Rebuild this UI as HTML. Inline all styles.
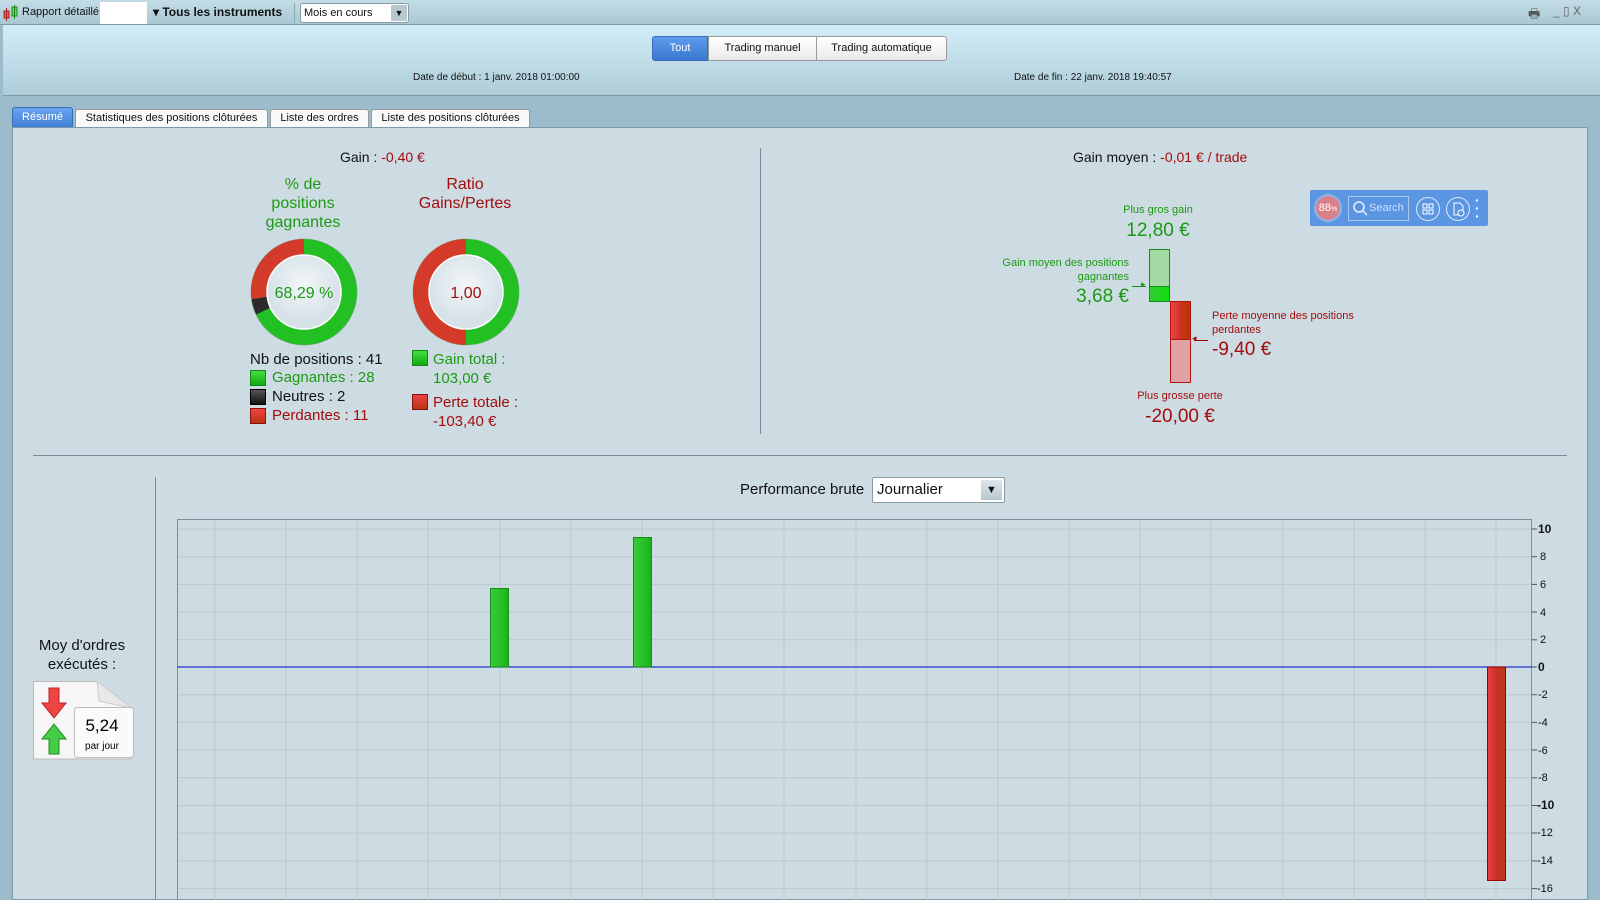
<!DOCTYPE html>
<html><head><meta charset="utf-8"><style>
*{margin:0;padding:0;box-sizing:border-box}
body{width:1600px;height:900px;overflow:hidden;background:#9dbccb;font-family:"Liberation Sans",sans-serif;position:relative;color:#111}
.a{position:absolute;white-space:nowrap}
.g{color:#1c9a12}.r{color:#a30c0c}
</style></head><body>
<div class="a" style="left:0;top:0;width:1600px;height:25px;background:linear-gradient(#c3dde6,#a9c8d4);border-bottom:1px solid #7d9aa8"></div>
<svg class="a" style="left:3px;top:5px" width="16" height="17"><rect x="1" y="6" width="5" height="7" fill="#e55" stroke="#a22"/><line x1="3.5" y1="3" x2="3.5" y2="16" stroke="#a22"/><rect x="9" y="2" width="5" height="9" fill="#5d5" stroke="#282"/><line x1="11.5" y1="0" x2="11.5" y2="14" stroke="#282"/></svg>
<div class="a" style="left:22px;top:6px;font-size:11px">Rapport détaillé</div>
<div class="a" style="left:100px;top:2px;width:47px;height:22px;background:#fff"></div>
<div class="a" style="left:153px;top:5px;font-size:12px;font-weight:bold">▾ Tous les instruments</div>
<div class="a" style="left:294px;top:3px;width:1px;height:20px;background:#8aa"></div>
<div class="a" style="left:300px;top:3px;width:109px;height:20px;background:#fff;border:1px solid #8a9aa2;border-radius:3px;font-size:11px;padding:3px 3px">Mois en cours</div>
<div class="a" style="left:391px;top:5px;width:16px;height:16px;background:#b8c8d0;font-size:9px;text-align:center;line-height:16px">▼</div>
<div class="a" style="left:1528px;top:5px;font-size:13px;color:#555">🖶</div>
<div class="a" style="left:1553px;top:4px;font-size:12px;color:#666">_ ▯ X</div>
<div class="a" style="left:3px;top:25px;width:1597px;height:71px;background:linear-gradient(#d2edf8,#aecdd9);border-bottom:1px solid #7d9aa8"></div>
<div class="a" style="left:652px;top:36px;width:56px;height:25px;background:linear-gradient(#5c9cec,#3b78d0);border:1px solid #3a6bb5;border-radius:3px 0 0 3px;color:#fff;font-size:11px;text-align:center;line-height:23px">Tout</div>
<div class="a" style="left:708px;top:36px;width:109px;height:25px;background:linear-gradient(#fff,#eaeaea);border:1px solid #999;font-size:11px;text-align:center;line-height:23px">Trading manuel</div>
<div class="a" style="left:816px;top:36px;width:131px;height:25px;background:linear-gradient(#fff,#eaeaea);border:1px solid #999;border-radius:0 3px 3px 0;font-size:11px;text-align:center;line-height:23px">Trading automatique</div>
<div class="a" style="left:413px;top:72px;font-size:10px">Date de début :  1 janv. 2018 01:00:00</div>
<div class="a" style="left:1014px;top:72px;font-size:10px">Date de fin :  22 janv. 2018 19:40:57</div>
<div class="a" style="left:12px;top:107px;width:61px;height:21px;background:linear-gradient(#69a4ee,#3f7fd6);border:1px solid #3a6bb5;border-radius:3px 3px 0 0;color:#fff;font-size:11px;text-align:center;line-height:19px">Résumé</div>
<div class="a" style="left:75px;top:109px;width:193px;height:19px;background:#fafafa;border:1px solid #999;border-radius:3px 3px 0 0;font-size:11px;text-align:center;line-height:17px">Statistiques des positions clôturées</div>
<div class="a" style="left:270px;top:109px;width:99px;height:19px;background:#fafafa;border:1px solid #999;border-radius:3px 3px 0 0;font-size:11px;text-align:center;line-height:17px">Liste des ordres</div>
<div class="a" style="left:371px;top:109px;width:159px;height:19px;background:#fafafa;border:1px solid #999;border-radius:3px 3px 0 0;font-size:11px;text-align:center;line-height:17px">Liste des positions clôturées</div>
<div class="a" style="left:12px;top:127px;width:1576px;height:773px;background:#cddce3;border:1px solid #7d9aa8"></div>
<div class="a" style="left:340px;top:149px;font-size:14px">Gain : <span class="r">-0,40 €</span></div>
<div class="a g" style="left:233px;top:175px;width:140px;text-align:center;font-size:16px;line-height:19px;white-space:normal">% de<br>positions<br>gagnantes</div>
<div class="a r" style="left:395px;top:175px;width:140px;text-align:center;font-size:16px;line-height:19px">Ratio<br>Gains/Pertes</div>
<svg class="a" style="left:240px;top:228px" width="130" height="130">
<defs><radialGradient id="ig" cx="50%" cy="40%"><stop offset="0" stop-color="#f2f6f8"/><stop offset="1" stop-color="#d6e2e8"/></radialGradient></defs>
<circle cx="64" cy="64" r="53" fill="#c8d2d8" stroke="#aab" />
<circle cx="64" cy="64" r="45" fill="none" stroke="#22c022" stroke-width="16"/>
<path d="M64 19 A45 45 0 0 0 19.4 70" fill="none" stroke="#d43a2a" stroke-width="16"/>
<path d="M19.4 70 A45 45 0 0 0 23.5 83" fill="none" stroke="#2a2a2a" stroke-width="16"/>
<circle cx="64" cy="64" r="37" fill="url(#ig)" stroke="#fff" stroke-width="1.5"/>
<text x="64" y="70" text-anchor="middle" font-size="16" fill="#1c9a12" font-family="Liberation Sans">68,29 %</text></svg>
<svg class="a" style="left:402px;top:228px" width="130" height="130">
<circle cx="64" cy="64" r="53" fill="#c8d2d8" stroke="#aab"/>
<circle cx="64" cy="64" r="45" fill="none" stroke="#22c022" stroke-width="16"/>
<path d="M64 19 A45 45 0 0 0 64 109" fill="none" stroke="#d43a2a" stroke-width="16"/>
<circle cx="64" cy="64" r="37" fill="url(#ig)" stroke="#fff" stroke-width="1.5"/>
<text x="64" y="70" text-anchor="middle" font-size="16" fill="#a30c0c" font-family="Liberation Sans">1,00</text></svg>
<div class="a" style="left:250px;top:350px;font-size:15px;line-height:19px">Nb de positions : 41</div>
<div class="a" style="left:250px;top:370px;width:16px;height:16px;background:linear-gradient(#4d4,#1a1);border:1px solid #181"></div>
<div class="a g" style="left:272px;top:369px;font-size:15px">Gagnantes : 28</div>
<div class="a" style="left:250px;top:389px;width:16px;height:16px;background:linear-gradient(#555,#111);border:1px solid #000"></div>
<div class="a" style="left:272px;top:388px;font-size:15px">Neutres : 2</div>
<div class="a" style="left:250px;top:408px;width:16px;height:16px;background:linear-gradient(#e44,#b31);border:1px solid #811"></div>
<div class="a r" style="left:272px;top:407px;font-size:15px">Perdantes : 11</div>
<div class="a" style="left:412px;top:350px;width:16px;height:16px;background:linear-gradient(#4d4,#1a1);border:1px solid #181"></div>
<div class="a g" style="left:433px;top:350px;font-size:15px;line-height:19px">Gain total :<br>103,00 €</div>
<div class="a" style="left:412px;top:394px;width:16px;height:16px;background:linear-gradient(#e44,#b31);border:1px solid #811"></div>
<div class="a r" style="left:433px;top:393px;font-size:15px;line-height:19px">Perte totale :<br>-103,40 €</div>
<div class="a" style="left:760px;top:148px;width:1px;height:286px;background:#7a8c96"></div>
<div class="a" style="left:1073px;top:149px;font-size:14px">Gain moyen : <span class="r">-0,01 € / trade</span></div>
<div class="a g" style="left:1088px;top:204px;width:140px;text-align:center;font-size:11px">Plus gros gain</div>
<div class="a g" style="left:1088px;top:220px;width:140px;text-align:center;font-size:19px">12,80 €</div>
<div class="a" style="left:1149px;top:249px;width:21px;height:53px;background:#a3d9a3;border:1px solid #1a8a1a"></div>
<div class="a" style="left:1149px;top:286px;width:21px;height:16px;background:linear-gradient(90deg,#3c3,#1d1);border:1px solid #1a8a1a"></div>
<div class="a" style="left:1170px;top:301px;width:21px;height:82px;background:#e0a2a2;border:1px solid #b01515"></div>
<div class="a" style="left:1170px;top:301px;width:21px;height:39px;background:linear-gradient(90deg,#e44,#c32 50%,#b30);border:1px solid #b01515"></div>
<div class="a g" style="left:980px;top:256px;width:149px;text-align:right;font-size:11px;line-height:14px">Gain moyen des positions<br>gagnantes</div>
<div class="a g" style="left:1040px;top:286px;width:89px;text-align:right;font-size:19px">3,68 €</div>
<div class="a" style="left:1132px;top:286px;width:14px;height:1px;background:#1a8a1a"></div><div class="a g" style="left:1141px;top:279px;font-size:9px">▸</div>
<div class="a r" style="left:1212px;top:309px;font-size:11px;line-height:14px">Perte moyenne des positions<br>perdantes</div>
<div class="a r" style="left:1212px;top:339px;font-size:19px">-9,40 €</div>
<div class="a" style="left:1194px;top:340px;width:14px;height:1px;background:#a00"></div><div class="a r" style="left:1192px;top:333px;font-size:9px">◂</div>
<div class="a r" style="left:1110px;top:390px;width:140px;text-align:center;font-size:11px">Plus grosse perte</div>
<div class="a r" style="left:1110px;top:406px;width:140px;text-align:center;font-size:19px">-20,00 €</div>
<div class="a" style="left:1310px;top:190px;width:178px;height:36px;background:#5b96e3;border-radius:2px"></div>
<div class="a" style="left:1314px;top:194px;width:28px;height:28px;border-radius:50%;background:#d9818a;border:2px solid #8bb4ee;color:#fff;font-size:11px;text-align:center;line-height:24px">88<span style="font-size:7px">%</span></div>
<div class="a" style="left:1348px;top:196px;width:61px;height:25px;border:1px solid #a9c8f2;color:#cfe0f8;font-size:11px;line-height:23px;padding-left:20px">Search</div>
<svg class="a" style="left:1352px;top:200px" width="16" height="16"><circle cx="7" cy="7" r="5" fill="none" stroke="#e6efff" stroke-width="1.5"/><line x1="11" y1="11" x2="15" y2="15" stroke="#e6efff" stroke-width="1.5"/></svg>
<svg class="a" style="left:1415px;top:196px" width="26" height="26"><circle cx="13" cy="13" r="11.5" fill="none" stroke="#dce8fb"/><g fill="none" stroke="#fff"><rect x="8" y="8" width="4" height="4"/><rect x="14" y="8" width="4" height="4"/><rect x="8" y="14" width="4" height="4"/><rect x="14" y="14" width="4" height="4"/></g></svg>
<svg class="a" style="left:1445px;top:196px" width="26" height="26"><circle cx="13" cy="13" r="11.5" fill="none" stroke="#dce8fb"/><path d="M9 7h6l3 3v9H9z" fill="none" stroke="#fff"/><circle cx="16" cy="17" r="3" fill="#5b96e3" stroke="#fff"/></svg>
<div class="a" style="left:1475px;top:196px;color:#fff;font-size:14px;line-height:8px;font-weight:bold">·<br>·<br>·</div>
<div class="a" style="left:33px;top:455px;width:1534px;height:1px;background:#7a8c96"></div>
<div class="a" style="left:155px;top:477px;width:1px;height:423px;background:#7a8c96"></div>
<div class="a" style="left:30px;top:636px;width:104px;text-align:center;font-size:15px;line-height:19px">Moy d'ordres<br>exécutés :</div>
<svg class="a" style="left:33px;top:681px" width="102" height="80">
<path d="M0.5 0.5H64L98 27V78H0.5Z" fill="#f6f6f6" stroke="#bbb"/><path d="M64 0.5L66 20L98 27" fill="#e8e8e8" stroke="#ccc"/>
<path d="M16 7h10v15h7l-12 15-12-15h7z" fill="#e44" stroke="#b22"/>
<path d="M21 43l12 15h-7v15h-10v-15h-7z" fill="#4c4" stroke="#282"/>
<rect x="41.5" y="26.5" width="59" height="50" rx="3" fill="#fafafa" stroke="#bbb"/>
<text x="69" y="50" text-anchor="middle" font-size="17" font-family="Liberation Sans" fill="#000">5,24</text>
<text x="69" y="68" text-anchor="middle" font-size="10" font-family="Liberation Sans" fill="#000">par jour</text></svg>
<div class="a" style="left:740px;top:481px;font-size:15px">Performance brute</div>
<div class="a" style="left:872px;top:477px;width:133px;height:26px;background:#fff;border:1px solid #8a9aa2;border-radius:2px;font-size:15px;padding:3px 4px">Journalier</div>
<div class="a" style="left:981px;top:480px;width:21px;height:20px;background:linear-gradient(#dde6ea,#b8c8d0);font-size:11px;text-align:center;line-height:20px">▼</div>
<svg class="a" style="left:0;top:500px" width="1600" height="400" font-family="Liberation Sans" font-size="11">
<g stroke="#bac8d0" stroke-width="1">
<line x1="177" y1="29" x2="1532" y2="29"/><line x1="177" y1="56.7" x2="1532" y2="56.7"/><line x1="177" y1="84.4" x2="1532" y2="84.4"/><line x1="177" y1="112" x2="1532" y2="112"/><line x1="177" y1="139.8" x2="1532" y2="139.8"/>
<line x1="177" y1="194.7" x2="1532" y2="194.7"/><line x1="177" y1="222.4" x2="1532" y2="222.4"/><line x1="177" y1="250" x2="1532" y2="250"/><line x1="177" y1="277.8" x2="1532" y2="277.8"/><line x1="177" y1="305.5" x2="1532" y2="305.5"/><line x1="177" y1="333" x2="1532" y2="333"/><line x1="177" y1="360.9" x2="1532" y2="360.9"/><line x1="177" y1="388.6" x2="1532" y2="388.6"/>
<line x1="215" y1="19" x2="215" y2="400"/><line x1="286" y1="19" x2="286" y2="400"/><line x1="357" y1="19" x2="357" y2="400"/><line x1="428" y1="19" x2="428" y2="400"/><line x1="500" y1="19" x2="500" y2="400"/><line x1="571" y1="19" x2="571" y2="400"/><line x1="642" y1="19" x2="642" y2="400"/><line x1="713" y1="19" x2="713" y2="400"/><line x1="784" y1="19" x2="784" y2="400"/><line x1="856" y1="19" x2="856" y2="400"/><line x1="927" y1="19" x2="927" y2="400"/><line x1="998" y1="19" x2="998" y2="400"/><line x1="1069" y1="19" x2="1069" y2="400"/><line x1="1140" y1="19" x2="1140" y2="400"/><line x1="1211" y1="19" x2="1211" y2="400"/><line x1="1283" y1="19" x2="1283" y2="400"/><line x1="1354" y1="19" x2="1354" y2="400"/><line x1="1425" y1="19" x2="1425" y2="400"/><line x1="1496" y1="19" x2="1496" y2="400"/>
</g>
<rect x="177.5" y="19.5" width="1354" height="390" fill="none" stroke="#7d8f98"/>
<line x1="177" y1="167" x2="1532" y2="167" stroke="#2233cc" stroke-width="1.2"/>
<defs><linearGradient id="gb"><stop offset="0" stop-color="#3ccc3c"/><stop offset="1" stop-color="#19b419"/></linearGradient><linearGradient id="rb"><stop offset="0" stop-color="#e84040"/><stop offset=".5" stop-color="#c8302a"/><stop offset="1" stop-color="#b83a10"/></linearGradient></defs>
<rect x="490.5" y="88.5" width="18" height="78.5" fill="url(#gb)" stroke="#1a8a1a"/>
<rect x="633.5" y="37.5" width="18" height="129.5" fill="url(#gb)" stroke="#1a8a1a"/>
<rect x="1487.5" y="167" width="18" height="213.5" fill="url(#rb)" stroke="#900"/>
<g fill="#111">
<text x="1538" y="33" font-weight="bold" font-size="12">10</text><text x="1540" y="60">8</text><text x="1540" y="88">6</text><text x="1540" y="116">4</text><text x="1540" y="143">2</text><text x="1538" y="171" font-weight="bold" font-size="12">0</text>
<text x="1538" y="198">-2</text><text x="1538" y="226">-4</text><text x="1538" y="254">-6</text><text x="1538" y="281">-8</text><text x="1537" y="309" font-weight="bold" font-size="12">-10</text><text x="1537" y="336">-12</text><text x="1537" y="364">-14</text><text x="1537" y="392">-16</text></g>
<g stroke="#555"><line x1="1532" y1="29" x2="1537" y2="29"/><line x1="1532" y1="56.7" x2="1537" y2="56.7"/><line x1="1532" y1="84.4" x2="1537" y2="84.4"/><line x1="1532" y1="112" x2="1537" y2="112"/><line x1="1532" y1="139.8" x2="1537" y2="139.8"/><line x1="1532" y1="167" x2="1537" y2="167"/><line x1="1532" y1="194.7" x2="1537" y2="194.7"/><line x1="1532" y1="222.4" x2="1537" y2="222.4"/><line x1="1532" y1="250" x2="1537" y2="250"/><line x1="1532" y1="277.8" x2="1537" y2="277.8"/><line x1="1532" y1="305.5" x2="1537" y2="305.5"/><line x1="1532" y1="333" x2="1537" y2="333"/><line x1="1532" y1="360.9" x2="1537" y2="360.9"/><line x1="1532" y1="388.6" x2="1537" y2="388.6"/></g>
</svg>
</body></html>
